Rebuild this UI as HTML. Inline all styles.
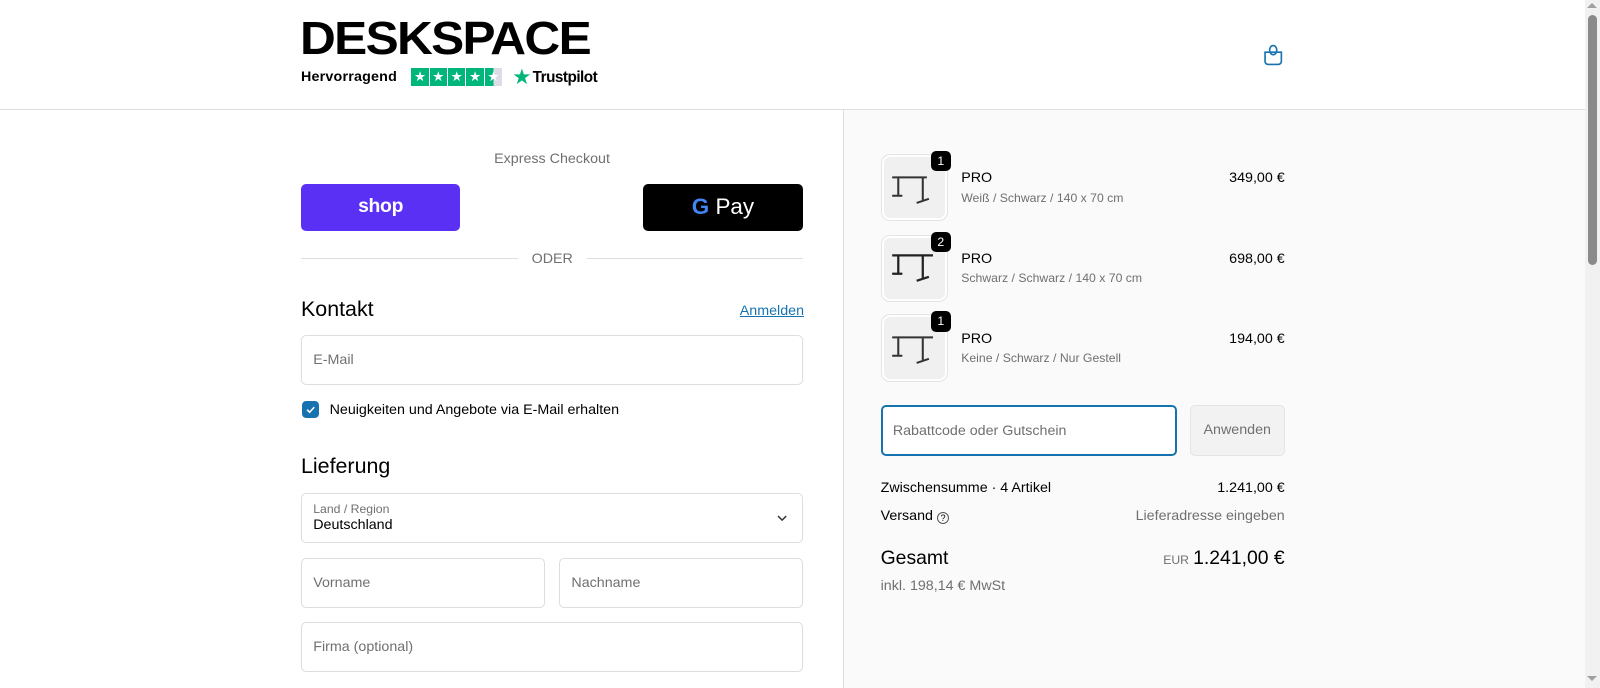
<!DOCTYPE html>
<html><head><meta charset="utf-8"><style>
*{box-sizing:border-box;margin:0;padding:0}
html,body{width:1600px;height:688px;overflow:hidden;background:#fff;font-family:"Liberation Sans",sans-serif;color:#000}
#w{zoom:1.020408;width:1568px;height:674px;position:relative}
.a{position:absolute}
.right{position:absolute;left:826px;top:108px;width:727px;height:566px;background:#fafafa;border-left:1px solid #dedede}
.inp{position:absolute;border:1px solid #dedede;border-radius:5px;background:#fff;font-size:14px;color:#707070;padding-left:11px;display:flex;align-items:center}
.thumb{position:absolute;left:864px;width:64px;height:64px;border:2px solid #fff;border-radius:8px;background:#f0f0f0;box-shadow:0 0 0 1px #e4e4e4}
.badge{position:absolute;left:912px;width:20px;height:20px;background:#000;color:#fff;border-radius:5px;font-size:12px;text-align:center;line-height:20px}
.pn{position:absolute;left:942px;font-size:14px}
.pv{position:absolute;left:942px;font-size:12px;color:#707070}
.pp{position:absolute;right:309px;font-size:14px}
</style></head><body><div id="w">
<div class="a" style="left:0;top:0;width:1553px;height:108px;border-bottom:1px solid #dedede"></div>
<div class="a" style="left:294px;top:14px;font-size:45px;line-height:48px;font-weight:900;letter-spacing:-1.5px;transform:scaleX(1.08);transform-origin:left">DESKSPACE</div>
<div class="a" style="left:295px;top:68px;font-size:14px;font-weight:bold;letter-spacing:0.2px">Hervorragend</div>
<div class="a" style="left:403px;top:67px;display:flex;gap:1px">
<span style="width:17px;height:17px;background:#00b67a;color:#fff;font-size:13px;text-align:center;line-height:17px">★</span><span style="width:17px;height:17px;background:#00b67a;color:#fff;font-size:13px;text-align:center;line-height:17px">★</span><span style="width:17px;height:17px;background:#00b67a;color:#fff;font-size:13px;text-align:center;line-height:17px">★</span><span style="width:17px;height:17px;background:#00b67a;color:#fff;font-size:13px;text-align:center;line-height:17px">★</span><span style="width:17px;height:17px;background:linear-gradient(90deg,#00b67a 50%,#dcdce6 50%);color:#fff;font-size:13px;text-align:center;line-height:17px">★</span></div>
<div class="a" style="left:502px;top:64px;font-size:21px;color:#00b67a">★</div>
<div class="a" style="left:522px;top:68px;font-size:15px;font-weight:bold;letter-spacing:-0.5px">Trustpilot</div>
<svg class="a" style="left:1238px;top:43px" width="20" height="22" viewBox="0 0 20 22" fill="none" stroke="#1773b0" stroke-width="1.6"><path d="M2 8h16v9a3 3 0 0 1-3 3H5a3 3 0 0 1-3-3z"/><ellipse cx="10" cy="6" rx="3.5" ry="4.5"/></svg>
<div class="right"></div>
<div class="a" style="left:295px;width:492px;top:148px;text-align:center;font-size:14px;color:#707070">Express Checkout</div>
<div class="a" style="left:295px;top:180px;width:156px;height:46px;background:#5a31f4;border-radius:5px;color:#fff;font-weight:bold;font-size:19px;text-align:center;line-height:44px;letter-spacing:-0.3px">shop</div>
<div class="a" style="left:630px;top:180px;width:157px;height:46px;background:#000;border-radius:5px;color:#fff;font-size:22px;line-height:46px;text-align:center"><b style="color:#4285f4;font-size:22px">G</b> Pay</div>
<div class="a" style="left:295px;top:253px;width:213px;border-top:1px solid #dedede"></div>
<div class="a" style="left:575px;top:253px;width:212px;border-top:1px solid #dedede"></div>
<div class="a" style="left:521px;top:246px;font-size:14px;color:#707070">ODER</div>
<div class="a" style="left:295px;top:291px;font-size:21px">Kontakt</div>
<div class="a" style="left:725px;top:297px;font-size:14px;color:#1773b0;text-decoration:underline">Anmelden</div>
<div class="inp" style="left:295px;top:328px;width:492px;height:49px">E-Mail</div>
<div class="a" style="left:296px;top:393px;width:17px;height:17px;background:#1773b0;border-radius:4px"><svg width="17" height="17"><path d="M5 8.5l2.5 2.5 4.5-5" stroke="#fff" stroke-width="1.5" fill="none"/></svg></div>
<div class="a" style="left:323px;top:394px;font-size:14px">Neuigkeiten und Angebote via E-Mail erhalten</div>
<div class="a" style="left:295px;top:445px;font-size:21px">Lieferung</div>
<div class="inp" style="left:295px;top:483px;width:492px;height:49px;display:block">
<div style="font-size:12px;margin-top:8px">Land / Region</div><div style="font-size:14px;color:#000;margin-top:1px">Deutschland</div>
<svg style="position:absolute;right:14px;top:19px" width="12" height="10"><path d="M2 3l4 4 4-4" stroke="#333" stroke-width="1.4" fill="none"/></svg></div>
<div class="inp" style="left:295px;top:547px;width:239px;height:49px">Vorname</div>
<div class="inp" style="left:548px;top:547px;width:239px;height:49px">Nachname</div>
<div class="inp" style="left:295px;top:610px;width:492px;height:49px">Firma (optional)</div>

<div class="thumb" style="top:152px"><svg width="60" height="60"><path d="M8 20h34M14 20v18M38 20v22M8 38h10M32 45l12-4" stroke="#333" stroke-width="2" fill="none"/></svg></div>
<div class="badge" style="top:148px">1</div>
<div class="pn" style="top:167px">PRO</div><div class="pv" style="top:187px">Weiß / Schwarz / 140 x 70 cm</div><div class="pp" style="top:167px">349,00 €</div>
<div class="thumb" style="top:231px"><svg width="60" height="60"><path d="M8 17h40M14 17v18M38 17v22M8 35h10M32 42l12-4" stroke="#222" stroke-width="2.2" fill="none"/></svg></div>
<div class="badge" style="top:227px">2</div>
<div class="pn" style="top:246px">PRO</div><div class="pv" style="top:266px">Schwarz / Schwarz / 140 x 70 cm</div><div class="pp" style="top:246px">698,00 €</div>
<div class="thumb" style="top:309px"><svg width="60" height="60"><path d="M8 20h40M14 20v18M38 20v22M8 38h10M32 45l12-4" stroke="#333" stroke-width="2" fill="none"/></svg></div>
<div class="badge" style="top:305px">1</div>
<div class="pn" style="top:324px">PRO</div><div class="pv" style="top:344px">Keine / Schwarz / Nur Gestell</div><div class="pp" style="top:324px">194,00 €</div>

<div class="inp" style="left:863px;top:397px;width:290px;height:50px;border:2px solid #1773b0;padding-left:10px">Rabattcode oder Gutschein</div>
<div class="a" style="left:1166px;top:397px;width:93px;height:50px;border:1px solid #e4e4e4;border-radius:5px;background:#f2f2f2;color:#707070;font-size:14px;text-align:center;line-height:48px">Anwenden</div>
<div class="a" style="left:863px;top:470px;font-size:14px">Zwischensumme · 4 Artikel</div>
<div class="pp" style="top:470px">1.241,00 €</div>
<div class="a" style="left:863px;top:498px;font-size:14px">Versand <span style="display:inline-block;width:12px;height:12px;border:1px solid #555;border-radius:50%;font-size:9px;text-align:center;line-height:11px;vertical-align:-1px">?</span></div>
<div class="pp" style="top:498px;color:#707070">Lieferadresse eingeben</div>
<div class="a" style="left:863px;top:536px;font-size:19px">Gesamt</div>
<div class="pp" style="top:536px;font-size:19px"><span style="font-size:12px;color:#707070;margin-right:4px">EUR</span>1.241,00 €</div>
<div class="a" style="left:863px;top:566px;font-size:14px;color:#707070">inkl. 198,14 € MwSt</div>

<div class="a" style="left:1553px;top:0;width:15px;height:674px;background:#f1f1f1"></div>
<div class="a" style="left:1556px;top:15px;width:9px;height:245px;background:#8a8a8a;border-radius:5px"></div>
<div class="a" style="left:1555px;top:3px;width:0;height:0;border:5px solid transparent;border-bottom-color:#a0a0a0;border-top:0"></div>
<div class="a" style="left:1555px;top:662px;width:0;height:0;border:5px solid transparent;border-top-color:#a0a0a0;border-bottom:0"></div>
</div></body></html>
